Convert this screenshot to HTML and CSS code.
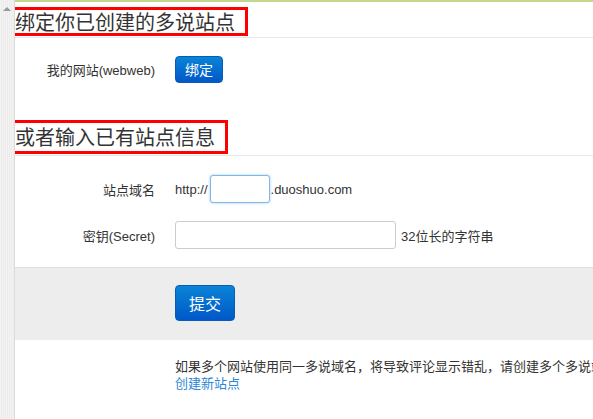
FILE: index.html
```html
<!DOCTYPE html>
<html lang="zh-CN">
<head>
<meta charset="utf-8">
<title>多说站点</title>
<link rel="stylesheet" href="styles.css">
</head>
<body>
<div class="page">
  <div class="rail"><span class="rail-arrow"></span></div>
  <div class="main">
    <div class="head">
      <h2 class="title title-sm">绑定你已创建的多说站点</h2>
    </div>
    <div class="row row-bind">
      <div class="label">我的网站(webweb)</div>
      <div class="field"><button class="btn btn-sm">绑定</button></div>
    </div>

    <div class="head head-second">
      <h2 class="title title-lg">或者输入已有站点信息</h2>
    </div>
    <div class="row row-domain">
      <div class="label">站点域名</div>
      <div class="field">http://<input class="input input-short focus" type="text">.duoshuo.com</div>
    </div>
    <div class="row row-secret">
      <div class="label">密钥(Secret)</div>
      <div class="field"><input class="input input-long" type="text"><span class="hint">32位长的字符串</span></div>
    </div>

    <div class="actions">
      <button class="btn btn-lg">提交</button>
    </div>

    <div class="note">
      <p>如果多个网站使用同一多说域名，将导致评论显示错乱，请创建多个多说站点。</p>
      <a class="link" href="#">创建新站点</a>
    </div>
  </div>
</div>
</body>
</html>
```
FILE: styles.css
```css
html, body {
  margin: 0;
  padding: 0;
  background: #fff;
  overflow: hidden;
}
body {
  font-family: "Liberation Sans", "Noto Sans CJK SC", sans-serif;
  font-size: 13px;
  color: #333;
}
.page {
  display: flex;
  height: 419px;
}
.rail {
  width: 14px;
  flex: none;
  background: repeating-linear-gradient(90deg, #f3f3f3 0, #f3f3f3 1px, #ececec 1px, #ececec 2px);
  border-right: 1px solid #dcdcdc;
  position: relative;
}
.rail-arrow {
  position: absolute;
  left: 3px;
  top: 7px;
  width: 0;
  height: 0;
  border-left: 4px solid transparent;
  border-right: 4px solid transparent;
  border-bottom: 4px solid #9a9a9a;
}
.main {
  flex: 1;
  min-width: 0;
  border-top: 2px solid #c4d78c;
  white-space: nowrap;
  overflow: hidden;
}
.head {
  border-bottom: 1px solid #e8e8e8;
  padding-top: 5px;
  padding-bottom: 1px;
}
.head-second {
  margin-top: 37px;
  padding-top: 0;
}
.title {
  display: inline-block;
  margin: 0 0 0 -4px;
  border: 3px solid #f00;
  padding: 0 10px 0 1px;
  font-family: "Noto Sans CJK SC", sans-serif;
  font-weight: normal;
  font-size: 20px;
  color: #333;
}
.title-sm {
  line-height: 23px;
}
.title-lg {
  line-height: 28px;
}
.row {
  display: flex;
  align-items: center;
}
.row-bind { margin-top: 18px; }
.row-domain { margin-top: 19px; }
.row-secret { margin-top: 18px; }
.label {
  width: 140px;
  text-align: right;
  padding-right: 20px;
  flex: none;
}
.field {
  display: flex;
  align-items: center;
}
.btn {
  font-family: "Noto Sans CJK SC", sans-serif;
  color: #fff;
  border: 1px solid #0a5bb5;
  border-radius: 4px;
  background: linear-gradient(#0a84d6, #0058c8);
  padding: 0;
  cursor: pointer;
}
.btn-sm {
  font-size: 14px;
  width: 48px;
  height: 27px;
  line-height: 25px;
}
.btn-lg {
  font-size: 16px;
  width: 60px;
  height: 36px;
  line-height: 34px;
}
.input {
  box-sizing: border-box;
  height: 28px;
  border: 1px solid #cccccc;
  border-radius: 3px;
  margin: 0;
  padding: 0 6px;
  font: inherit;
}
.input-short {
  width: 60px;
  margin: 0 1px 0 2px;
}
.input-long {
  width: 221px;
}
.focus {
  border-color: #7fb6ea;
  box-shadow: 0 0 3px rgba(102, 175, 233, 0.6);
  outline: none;
}
.hint {
  margin-left: 5px;
}
.actions {
  margin-top: 18px;
  border-top: 1px solid #dddddd;
  background: #ededed;
  padding: 17px 0 19px 160px;
}
.note {
  padding: 18px 0 0 160px;
  line-height: 17px;
}
.note p {
  margin: 0;
}
.link {
  color: #2b86d4;
  text-decoration: none;
}
```
